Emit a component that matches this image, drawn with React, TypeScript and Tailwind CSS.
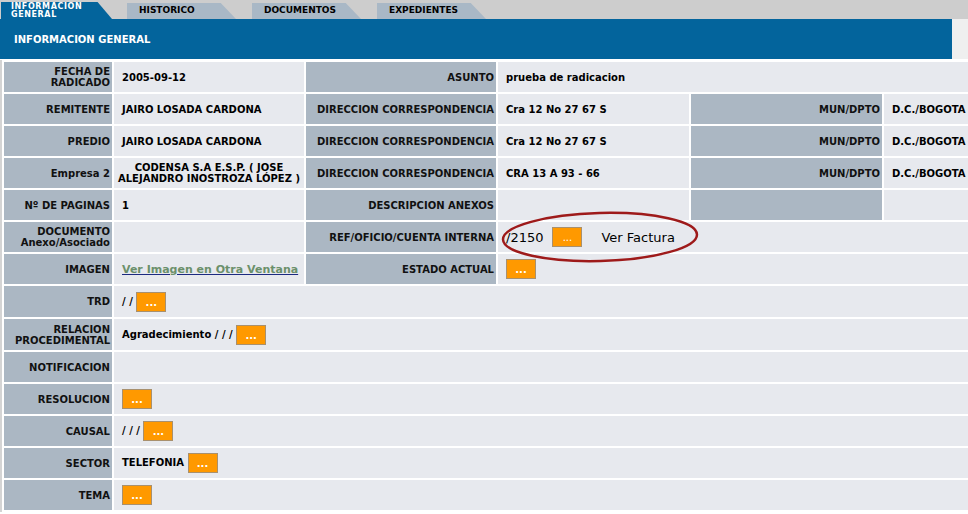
const Btn = () => (
  <span className="inline-flex h-[20px] w-[30px] items-end justify-center border border-[#a8906e] bg-[#ff9900] pb-[3px] align-middle text-[10px] leading-[10px] text-white">
    ...
  </span>
);

const Label = ({ children, tall }: { children?: React.ReactNode; tall?: boolean }) => (
  <td className={`${tall ? "h-[31px]" : "h-[30px]"} bg-[#abb7c3] pr-[2px] text-right align-middle font-bold text-[#111]`}>
    {children}
  </td>
);

const Value = ({ children, span, center }: { children?: React.ReactNode; span?: number; center?: boolean }) => (
  <td colSpan={span} className={`bg-[#e7e9ee] align-middle font-bold text-black ${center ? "px-[2px] text-center" : "pl-[8px]"}`}>
    {children}
  </td>
);

const Tab = ({ label, className }: { label: string; className: string }) => (
  <div className={`flex h-[16px] w-[109px] items-center bg-[#a9b8c6] pl-[12px] text-[9px] font-bold text-black [clip-path:polygon(0_0,86%_0,100%_100%,0_100%)] ${className}`}>
    {label}
  </div>
);

export default function App() {
  return (
    <div className="relative h-[514px] w-[968px] overflow-hidden bg-white font-['DejaVu_Sans',sans-serif]">
      <div className="flex h-[19px] items-end bg-[#cdcdcd] pl-px">
        <div className="flex h-[17px] w-[111px] flex-col justify-center bg-[#03649c] pl-[10px] text-[8px] leading-[8px] font-bold tracking-[0.6px] text-white [clip-path:polygon(0_0,87%_0,100%_100%,0_100%)]">
          <span>INFORMACION</span>
          <span>GENERAL</span>
        </div>
        <Tab label="HISTORICO" className="ml-[15px]" />
        <Tab label="DOCUMENTOS" className="ml-[16px]" />
        <Tab label="EXPEDIENTES" className="ml-[16px]" />
      </div>
      <div className="flex h-[40px] bg-[#efefef]">
        <div className="flex w-[952px] items-center bg-[#03649c] pl-[14px] text-[10px] font-bold text-white">
          INFORMACION GENERAL
        </div>
      </div>
      <div className="mt-px border-l-2 border-[#d4d4d4]">
        <table className="w-[1074px] table-fixed border-separate border-spacing-[2px] text-[10px] leading-[11px]">
          <colgroup>
            <col className="w-[108px]" />
            <col className="w-[190px]" />
            <col className="w-[190px]" />
            <col className="w-[191px]" />
            <col className="w-[191px]" />
            <col className="w-[190px]" />
          </colgroup>
          <tbody>
            <tr>
              <Label>FECHA DE<br />RADICADO</Label>
              <Value>2005-09-12</Value>
              <Label>ASUNTO</Label>
              <Value span={3}>prueba de radicacion</Value>
            </tr>
            <tr>
              <Label>REMITENTE</Label>
              <Value>JAIRO LOSADA CARDONA</Value>
              <Label>DIRECCION CORRESPONDENCIA</Label>
              <Value>Cra 12 No 27 67 S</Value>
              <Label>MUN/DPTO</Label>
              <Value>D.C./BOGOTA</Value>
            </tr>
            <tr>
              <Label>PREDIO</Label>
              <Value>JAIRO LOSADA CARDONA</Value>
              <Label>DIRECCION CORRESPONDENCIA</Label>
              <Value>Cra 12 No 27 67 S</Value>
              <Label>MUN/DPTO</Label>
              <Value>D.C./BOGOTA</Value>
            </tr>
            <tr>
              <Label>Empresa 2</Label>
              <Value center>CODENSA S.A E.S.P. ( JOSE<br />ALEJANDRO INOSTROZA LÓPEZ )</Value>
              <Label>DIRECCION CORRESPONDENCIA</Label>
              <Value>CRA 13 A 93 - 66</Value>
              <Label>MUN/DPTO</Label>
              <Value>D.C./BOGOTA</Value>
            </tr>
            <tr>
              <Label>Nº DE PAGINAS</Label>
              <Value>1</Value>
              <Label>DESCRIPCION ANEXOS</Label>
              <Value />
              <Label />
              <Value />
            </tr>
            <tr>
              <Label>DOCUMENTO<br />Anexo/Asociado</Label>
              <Value />
              <Label>REF/OFICIO/CUENTA INTERNA</Label>
              <Value span={3}>
                <span className="flex items-center text-[13px] leading-[15px] font-normal">
                  <span>/2150</span>
                  <span className="ml-[9px] flex"><Btn /></span>
                  <span className="ml-[19px]">Ver Factura</span>
                </span>
              </Value>
            </tr>
            <tr>
              <Label>IMAGEN</Label>
              <Value>
                <a href="#" className="text-[11px] text-[#6b906b] underline decoration-[#1c2a80]">
                  Ver Imagen en Otra Ventana
                </a>
              </Value>
              <Label>ESTADO ACTUAL</Label>
              <Value span={3}><Btn /></Value>
            </tr>
            <tr>
              <Label tall>TRD</Label>
              <Value span={5}>/ / <Btn /></Value>
            </tr>
            <tr>
              <Label tall>RELACION<br />PROCEDIMENTAL</Label>
              <Value span={5}>Agradecimiento / / / <Btn /></Value>
            </tr>
            <tr>
              <Label>NOTIFICACION</Label>
              <Value span={5} />
            </tr>
            <tr>
              <Label>RESOLUCION</Label>
              <Value span={5}><Btn /></Value>
            </tr>
            <tr>
              <Label>CAUSAL</Label>
              <Value span={5}>/ / / <Btn /></Value>
            </tr>
            <tr>
              <Label>SECTOR</Label>
              <Value span={5}>TELEFONIA <Btn /></Value>
            </tr>
            <tr>
              <Label>TEMA</Label>
              <Value span={5}><Btn /></Value>
            </tr>
          </tbody>
        </table>
      </div>
      <svg className="pointer-events-none absolute left-[496px] top-[207px]" width="212" height="62" viewBox="0 0 212 62">
        <ellipse cx="104" cy="30" rx="97" ry="24" fill="none" stroke="#9e1a1a" strokeWidth="2.5" transform="rotate(-1.5 104 30)" />
      </svg>
    </div>
  );
}
